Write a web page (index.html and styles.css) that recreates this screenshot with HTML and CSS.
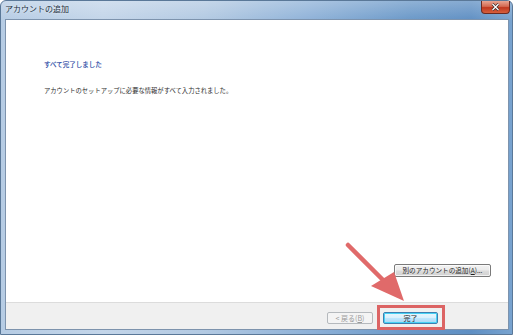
FILE: index.html
```html
<!DOCTYPE html>
<html lang="ja">

<head>
    <meta charset="UTF-8">
    <title>アカウントの追加</title>
    <link rel="stylesheet" href="styles.css">
</head>

<body>
    <div class="window">
        <div class="titlebar">
            <span class="title">アカウントの追加</span>
            <span class="close">
                <svg width="9" height="8" viewBox="0 0 9 8">
                    <path d="M1.5 1 L7.5 7 M7.5 1 L1.5 7" stroke="#3a2a2a" stroke-width="2.6" />
                    <path d="M1.5 1 L7.5 7 M7.5 1 L1.5 7" stroke="#ffffff" stroke-width="1.3" />
                </svg>
            </span>
        </div>

        <div class="client">
            <div class="content">
                <h2 class="heading">すべて完了しました</h2>
                <p class="message">アカウントのセットアップに必要な情報がすべて入力されました。</p>
                <div class="spacer"></div>
                <div class="extra-row">
                    <button class="btn">別のアカウントの追加(<u>A</u>)...</button>
                </div>
            </div>
            <div class="footer">
                <button class="btn btn-back" disabled>&lt; 戻る(<u>B</u>)</button>
                <button class="btn btn-default">完了</button>
            </div>
        </div>

        <svg class="annotation" width="513" height="335" viewBox="0 0 513 335">
            <line x1="348" y1="245" x2="384" y2="281" stroke="#e06a6a" stroke-width="4.5" stroke-linecap="round" />
            <polygon points="371,286 394,272 404,301" fill="#e06a6a" />
            <rect x="378.5" y="306.5" width="65" height="22" fill="none" stroke="#dc6464" stroke-width="3" />
        </svg>
    </div>
</body>

</html>
```

FILE: styles.css
```css
* {
    box-sizing: border-box;
}

body {
    margin: 0;
    width: 513px;
    height: 335px;
    overflow: hidden;
    font-family: "Noto Sans CJK JP", "Noto Sans", sans-serif;
    background: #ffffff;
}

.window {
    position: relative;
    height: 335px;
    display: flex;
    flex-direction: column;
    border-radius: 6px 6px 0 0;
    border: 1px solid #5a7898;
    background:
        linear-gradient(to bottom, rgba(255, 255, 255, 0.25), rgba(255, 255, 255, 0) 20px),
        linear-gradient(to right, #b6cce4 0%, #c3d5e9 20%, #b2c9e2 40%, #8fb2d8 60%, #6a98c8 80%, #5f8fc3 92%, #78a3cf 100%);
}

.titlebar {
    height: 18px;
    display: flex;
    justify-content: space-between;
    align-items: flex-start;
    padding-left: 4px;
}

.title {
    margin-top: 3px;
    font-size: 8px;
    line-height: 10px;
    color: #24303e;
    text-shadow: 0 0 3px rgba(255, 255, 255, 0.8);
}

.close {
    width: 29px;
    height: 13px;
    margin-right: 2px;
    display: flex;
    align-items: center;
    justify-content: center;
    border: 1px solid #6b2a22;
    border-top: none;
    border-radius: 0 0 4px 4px;
    background: linear-gradient(to bottom, #e8a593 0%, #d46a52 45%, #c0381f 55%, #d6603e 100%);
}

.client {
    flex: 1;
    margin: 0 3px 4px 4px;
    display: flex;
    flex-direction: column;
    border: 1px solid #7d93ad;
}

.content {
    flex: 1;
    display: flex;
    flex-direction: column;
    background: #ffffff;
    padding: 40px 17px 25px 38px;
}

.heading {
    margin: 0;
    font-size: 6.5px;
    line-height: 9px;
    font-weight: normal;
    color: #1f45a3;
    -webkit-text-stroke: 0.15px #1f45a3;
}

.message {
    margin: 17px 0 0;
    font-size: 6.3px;
    line-height: 9px;
    color: #2e2e2e;
}

.spacer {
    flex: 1;
}

.extra-row {
    display: flex;
    justify-content: flex-end;
}

.btn {
    height: 13px;
    padding: 0 4px;
    font-family: inherit;
    font-size: 6.6px;
    line-height: 11px;
    color: #1e1e1e;
    border: 1px solid #7a7a7a;
    border-radius: 2px;
    background: linear-gradient(to bottom, #f3f3f3 0%, #ebebeb 48%, #dcdcdc 52%, #d2d2d2 100%);
    box-shadow: inset 0 0 0 1px rgba(255, 255, 255, 0.7);
}

.extra-row .btn {
    width: 97px;
}

.footer {
    height: 27px;
    display: flex;
    justify-content: flex-end;
    align-items: center;
    gap: 10px;
    padding: 3px 70px 0 0;
    background: #f0f0f0;
    border-top: 1px solid #dcdcdc;
}

.footer .btn {
    height: 12px;
    line-height: 10px;
    font-size: 7px;
}

.btn-back {
    width: 46px;
    color: #9a9a9a;
    border-color: #b5b9bd;
    background: #f4f4f4;
    box-shadow: none;
}

.btn-default {
    width: 55px;
    border-color: #3c7fb1;
    background: linear-gradient(to bottom, #eaf6fd 0%, #d9f0fc 48%, #bee6fd 52%, #a7d9f5 100%);
    box-shadow: inset 0 0 0 1px #48d2f5;
}

.annotation {
    position: absolute;
    left: -1px;
    top: -1px;
    pointer-events: none;
}
```
